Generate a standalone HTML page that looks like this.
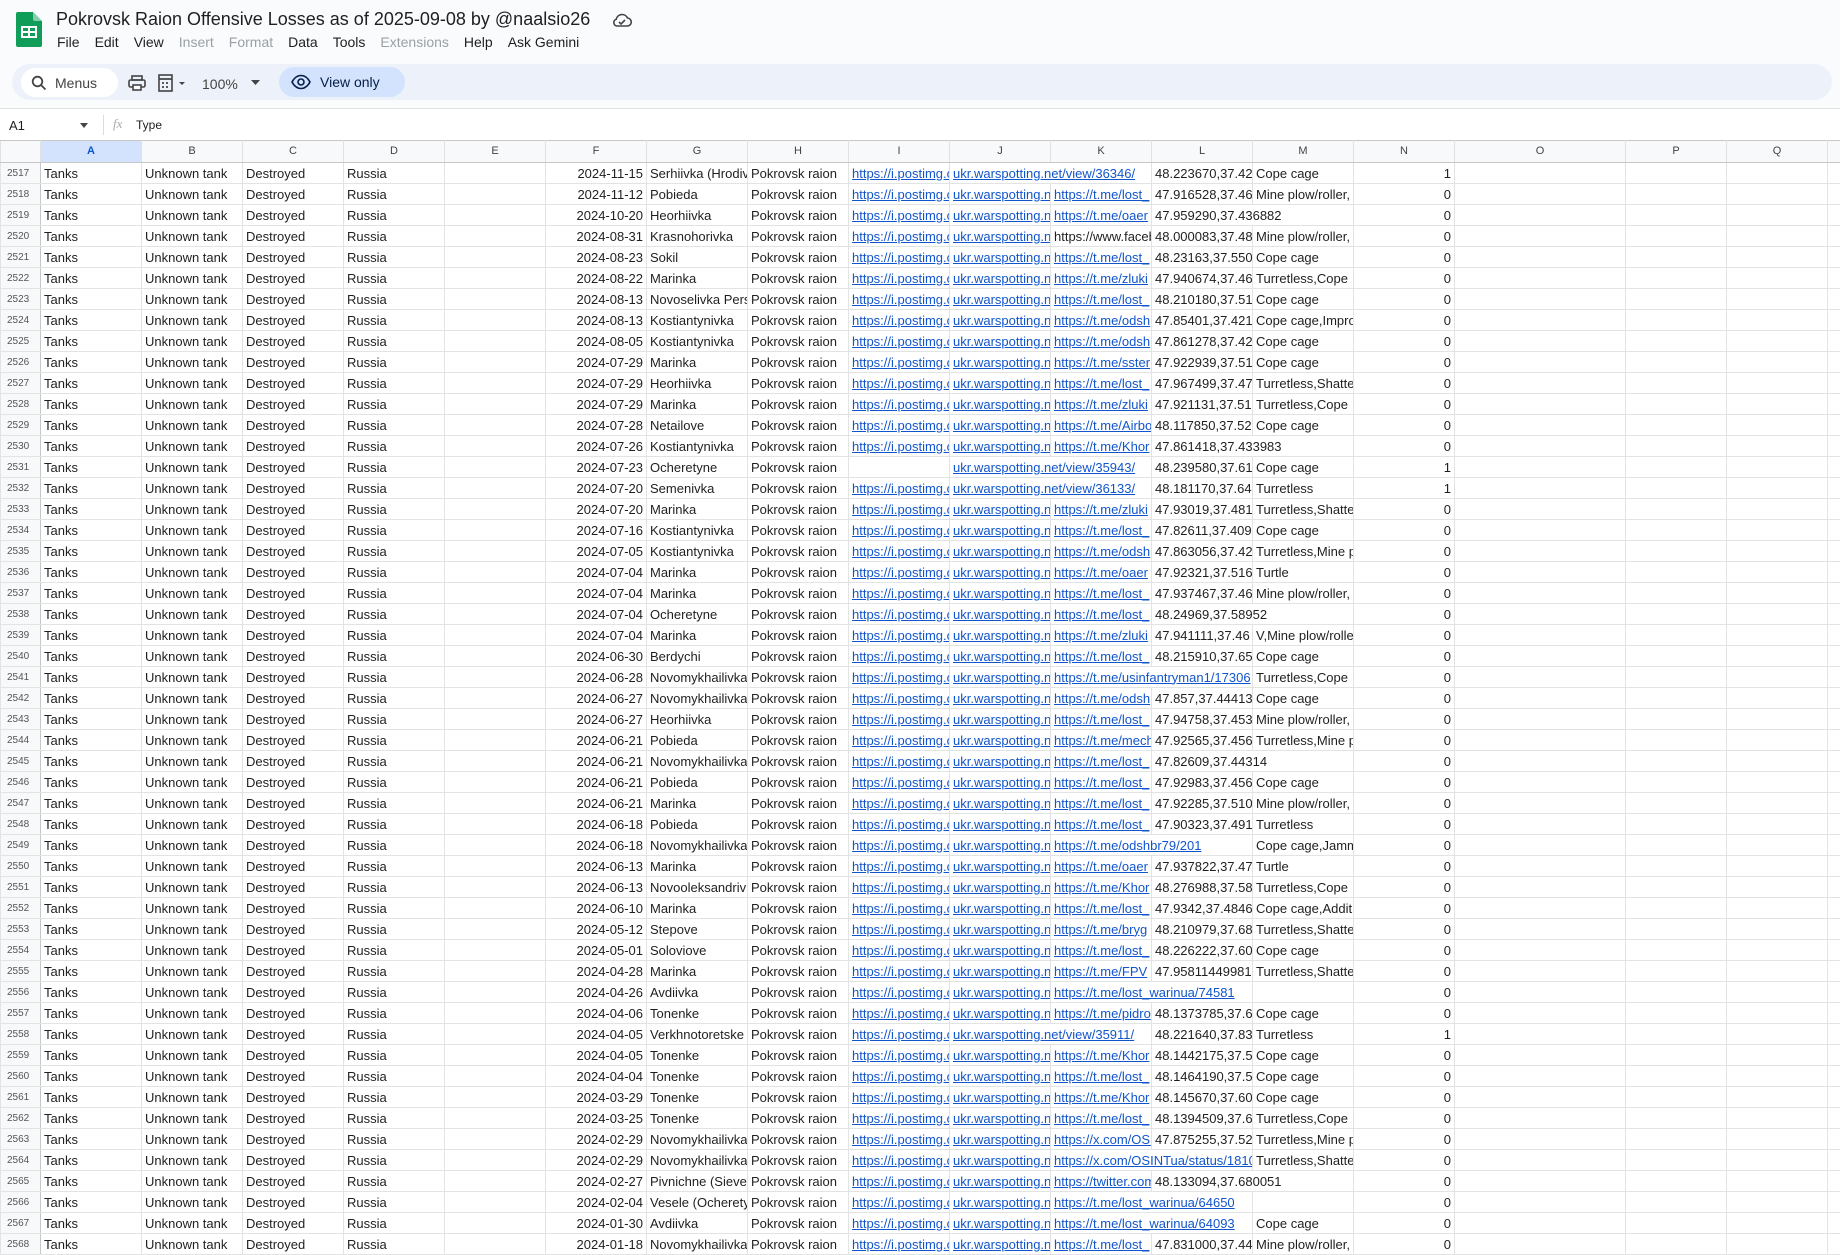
<!DOCTYPE html>
<html><head><meta charset="utf-8">
<style>
*{box-sizing:border-box;margin:0;padding:0}
body{width:1840px;height:1240px;overflow:hidden;background:#f9fbfd;font-family:"Liberation Sans",Arial,sans-serif;color:#1f1f1f;position:relative}
.logo{position:absolute;left:16px;top:12px}
.title{position:absolute;left:56px;top:9px;font-size:18px;color:#1f1f1f}
.cloud{position:absolute;left:612px;top:12px}
.menu{position:absolute;left:57px;top:34px;font-size:14px;display:flex;gap:0}
.menu span{margin-right:15px}
.menu .g{color:#9aa0a6}
.tb{position:absolute;left:12px;top:64px;width:1820px;height:36px;background:#edf2fa;border-radius:18px}
.search{position:absolute;left:21px;top:68px;width:97px;height:29px;background:#fff;border-radius:15px;font-size:14px;color:#444}
.search span{position:absolute;left:34px;top:7px}
.pct{position:absolute;left:202px;top:76px;font-size:14px;color:#444}
.view{position:absolute;left:279px;top:67px;width:126px;height:30px;background:#d3e3fd;border-radius:15px;font-size:14px;color:#041e49}
.view span{position:absolute;left:41px;top:7px;font-weight:bold;font-weight:500}
.fbar{position:absolute;left:0;top:108px;width:1840px;height:32px;background:#fff;border-top:1px solid #e1e3e1}
.fbar .a1{position:absolute;left:9px;top:9px;font-size:13px}
.fbar .dv{position:absolute;left:103px;top:6px;width:1px;height:20px;background:#dadce0}
.fbar .fx{position:absolute;left:113px;top:7px;font-size:13px;color:#aaa;font-style:italic;font-family:"Liberation Serif",serif}
.fbar .ty{position:absolute;left:136px;top:9px;font-size:12px}
table{position:absolute;left:0;top:140px;width:1840px;border-collapse:collapse;table-layout:fixed;background:#fff;font-size:13px}
td,th{height:21px;border:1px solid #e2e3e3;overflow:hidden;white-space:nowrap;padding:0 3px;text-align:left;font-weight:normal;line-height:19px}
thead th{background:#f8f9fa;color:#444;font-size:11px;text-align:center;height:22px;border-color:#c7c7c7 #e1e1e1}
thead th.sel{background:#d3e3fd;color:#0b57d0;font-weight:bold}
tbody th{background:#f8f9fa;color:#555;font-size:10px;text-align:left;padding-left:6px;border-right-color:#c7c7c7}
td.r{text-align:right}
td a{color:#1155cc;text-decoration:underline}
</style></head><body>
<svg class="logo" width="26" height="35" viewBox="0 0 26 35"><path d="M2 0h15l9 9v24a2 2 0 0 1-2 2H2a2 2 0 0 1-2-2V2a2 2 0 0 1 2-2z" fill="#0f9d58"/><path d="M17 0v7a2 2 0 0 0 2 2h7z" fill="#87ceac"/><rect x="6" y="15" width="14" height="10" fill="none" stroke="#fff" stroke-width="2"/><path d="M6 20h14M13 15v10" stroke="#fff" stroke-width="2"/></svg>
<div class="title">Pokrovsk Raion Offensive Losses as of 2025-09-08 by @naalsio26</div>
<svg class="cloud" width="20" height="16" viewBox="0 0 20 16"><path d="M5 14h10a4 4 0 0 0 .5-8A6 6 0 0 0 4.2 7.2 3.5 3.5 0 0 0 5 14z" fill="none" stroke="#444" stroke-width="1.6"/><path d="M7 10l2 2 4-4" fill="none" stroke="#444" stroke-width="1.6"/></svg>
<div class="menu"><span>File</span><span>Edit</span><span>View</span><span class="g">Insert</span><span class="g">Format</span><span>Data</span><span>Tools</span><span class="g">Extensions</span><span>Help</span><span>Ask Gemini</span></div>
<div class="tb"></div>
<div class="search"><svg style="position:absolute;left:10px;top:7px" width="16" height="16" viewBox="0 0 16 16"><circle cx="6.5" cy="6.5" r="4.8" fill="none" stroke="#444" stroke-width="1.8"/><path d="M10 10l4.5 4.5" stroke="#444" stroke-width="1.8"/></svg><span>Menus</span></div>
<svg style="position:absolute;left:128px;top:75px" width="18" height="16" viewBox="0 0 18 16"><rect x="4" y="1" width="10" height="4" fill="none" stroke="#444" stroke-width="1.6"/><rect x="1" y="5" width="16" height="7" rx="1.5" fill="none" stroke="#444" stroke-width="1.6"/><rect x="5" y="10" width="8" height="5" fill="#fff" stroke="#444" stroke-width="1.6"/></svg>
<svg style="position:absolute;left:158px;top:74px" width="30" height="18" viewBox="0 0 30 18"><rect x="1" y="1" width="13" height="16" fill="none" stroke="#444" stroke-width="1.6"/><path d="M1 5h13M4 9h2M8 9h2M4 13h2M8 13h2" stroke="#444" stroke-width="1.8"/><path d="M21 8h6l-3 3z" fill="#444"/></svg>
<div class="pct">100%</div>
<svg style="position:absolute;left:251px;top:80px" width="9" height="5" viewBox="0 0 9 5"><path d="M0 0h9L4.5 5z" fill="#444"/></svg>
<div class="view"><svg style="position:absolute;left:12px;top:7px" width="20" height="16" viewBox="0 0 20 16"><path d="M1 8c2.5-4.5 5.5-6.5 9-6.5s6.5 2 9 6.5c-2.5 4.5-5.5 6.5-9 6.5S3.5 12.5 1 8z" fill="none" stroke="#041e49" stroke-width="1.6"/><circle cx="10" cy="8" r="3" fill="none" stroke="#041e49" stroke-width="1.6"/></svg><span>View only</span></div>
<div class="fbar"><span class="a1">A1</span><svg style="position:absolute;left:80px;top:14px" width="8" height="5"><path d="M0 0h8L4 5z" fill="#444"/></svg><div class="dv"></div><span class="fx">fx</span><span class="ty">Type</span></div>
<table>
<colgroup><col style="width:40px"><col style="width:101px"><col style="width:101px"><col style="width:101px"><col style="width:101px"><col style="width:101px"><col style="width:101px"><col style="width:101px"><col style="width:101px"><col style="width:101px"><col style="width:101px"><col style="width:101px"><col style="width:101px"><col style="width:101px"><col style="width:101px"><col style="width:171px"><col style="width:101px"><col style="width:101px"><col style="width:13px"></colgroup>
<thead><tr><th></th><th class="sel">A</th><th>B</th><th>C</th><th>D</th><th>E</th><th>F</th><th>G</th><th>H</th><th>I</th><th>J</th><th>K</th><th>L</th><th>M</th><th>N</th><th>O</th><th>P</th><th>Q</th><th></th></tr></thead>
<tbody>
<tr><th>2517</th><td>Tanks</td><td>Unknown tank</td><td>Destroyed</td><td>Russia</td><td></td><td class="r">2024-11-15</td><td>Serhiivka (Hrodivka)</td><td>Pokrovsk raion</td><td><a>https://i.postimg.cc</a></td><td colspan="2"><a>ukr.warspotting.net/view/36346/</a></td><td>48.223670,37.42</td><td>Cope cage</td><td class="r">1</td><td></td><td></td><td></td><td></td></tr>
<tr><th>2518</th><td>Tanks</td><td>Unknown tank</td><td>Destroyed</td><td>Russia</td><td></td><td class="r">2024-11-12</td><td>Pobieda</td><td>Pokrovsk raion</td><td><a>https://i.postimg.cc</a></td><td><a>ukr.warspotting.net</a></td><td><a>https://t.me/lost_</a></td><td>47.916528,37.46</td><td>Mine plow/roller,</td><td class="r">0</td><td></td><td></td><td></td><td></td></tr>
<tr><th>2519</th><td>Tanks</td><td>Unknown tank</td><td>Destroyed</td><td>Russia</td><td></td><td class="r">2024-10-20</td><td>Heorhiivka</td><td>Pokrovsk raion</td><td><a>https://i.postimg.cc</a></td><td><a>ukr.warspotting.net</a></td><td><a>https://t.me/oaer</a></td><td colspan="2">47.959290,37.436882</td><td class="r">0</td><td></td><td></td><td></td><td></td></tr>
<tr><th>2520</th><td>Tanks</td><td>Unknown tank</td><td>Destroyed</td><td>Russia</td><td></td><td class="r">2024-08-31</td><td>Krasnohorivka</td><td>Pokrovsk raion</td><td><a>https://i.postimg.cc</a></td><td><a>ukr.warspotting.net</a></td><td>https://www.facebook</td><td>48.000083,37.48</td><td>Mine plow/roller,</td><td class="r">0</td><td></td><td></td><td></td><td></td></tr>
<tr><th>2521</th><td>Tanks</td><td>Unknown tank</td><td>Destroyed</td><td>Russia</td><td></td><td class="r">2024-08-23</td><td>Sokil</td><td>Pokrovsk raion</td><td><a>https://i.postimg.cc</a></td><td><a>ukr.warspotting.net</a></td><td><a>https://t.me/lost_</a></td><td>48.23163,37.550</td><td>Cope cage</td><td class="r">0</td><td></td><td></td><td></td><td></td></tr>
<tr><th>2522</th><td>Tanks</td><td>Unknown tank</td><td>Destroyed</td><td>Russia</td><td></td><td class="r">2024-08-22</td><td>Marinka</td><td>Pokrovsk raion</td><td><a>https://i.postimg.cc</a></td><td><a>ukr.warspotting.net</a></td><td><a>https://t.me/zluki</a></td><td>47.940674,37.46</td><td>Turretless,Cope</td><td class="r">0</td><td></td><td></td><td></td><td></td></tr>
<tr><th>2523</th><td>Tanks</td><td>Unknown tank</td><td>Destroyed</td><td>Russia</td><td></td><td class="r">2024-08-13</td><td>Novoselivka Persha</td><td>Pokrovsk raion</td><td><a>https://i.postimg.cc</a></td><td><a>ukr.warspotting.net</a></td><td><a>https://t.me/lost_</a></td><td>48.210180,37.51</td><td>Cope cage</td><td class="r">0</td><td></td><td></td><td></td><td></td></tr>
<tr><th>2524</th><td>Tanks</td><td>Unknown tank</td><td>Destroyed</td><td>Russia</td><td></td><td class="r">2024-08-13</td><td>Kostiantynivka</td><td>Pokrovsk raion</td><td><a>https://i.postimg.cc</a></td><td><a>ukr.warspotting.net</a></td><td><a>https://t.me/odsh</a></td><td>47.85401,37.421</td><td>Cope cage,Improvised</td><td class="r">0</td><td></td><td></td><td></td><td></td></tr>
<tr><th>2525</th><td>Tanks</td><td>Unknown tank</td><td>Destroyed</td><td>Russia</td><td></td><td class="r">2024-08-05</td><td>Kostiantynivka</td><td>Pokrovsk raion</td><td><a>https://i.postimg.cc</a></td><td><a>ukr.warspotting.net</a></td><td><a>https://t.me/odsh</a></td><td>47.861278,37.42</td><td>Cope cage</td><td class="r">0</td><td></td><td></td><td></td><td></td></tr>
<tr><th>2526</th><td>Tanks</td><td>Unknown tank</td><td>Destroyed</td><td>Russia</td><td></td><td class="r">2024-07-29</td><td>Marinka</td><td>Pokrovsk raion</td><td><a>https://i.postimg.cc</a></td><td><a>ukr.warspotting.net</a></td><td><a>https://t.me/sster</a></td><td>47.922939,37.51</td><td>Cope cage</td><td class="r">0</td><td></td><td></td><td></td><td></td></tr>
<tr><th>2527</th><td>Tanks</td><td>Unknown tank</td><td>Destroyed</td><td>Russia</td><td></td><td class="r">2024-07-29</td><td>Heorhiivka</td><td>Pokrovsk raion</td><td><a>https://i.postimg.cc</a></td><td><a>ukr.warspotting.net</a></td><td><a>https://t.me/lost_</a></td><td>47.967499,37.47</td><td>Turretless,Shattered</td><td class="r">0</td><td></td><td></td><td></td><td></td></tr>
<tr><th>2528</th><td>Tanks</td><td>Unknown tank</td><td>Destroyed</td><td>Russia</td><td></td><td class="r">2024-07-29</td><td>Marinka</td><td>Pokrovsk raion</td><td><a>https://i.postimg.cc</a></td><td><a>ukr.warspotting.net</a></td><td><a>https://t.me/zluki</a></td><td>47.921131,37.51</td><td>Turretless,Cope</td><td class="r">0</td><td></td><td></td><td></td><td></td></tr>
<tr><th>2529</th><td>Tanks</td><td>Unknown tank</td><td>Destroyed</td><td>Russia</td><td></td><td class="r">2024-07-28</td><td>Netailove</td><td>Pokrovsk raion</td><td><a>https://i.postimg.cc</a></td><td><a>ukr.warspotting.net</a></td><td><a>https://t.me/Airbo</a></td><td>48.117850,37.52</td><td>Cope cage</td><td class="r">0</td><td></td><td></td><td></td><td></td></tr>
<tr><th>2530</th><td>Tanks</td><td>Unknown tank</td><td>Destroyed</td><td>Russia</td><td></td><td class="r">2024-07-26</td><td>Kostiantynivka</td><td>Pokrovsk raion</td><td><a>https://i.postimg.cc</a></td><td><a>ukr.warspotting.net</a></td><td><a>https://t.me/Khor</a></td><td colspan="2">47.861418,37.433983</td><td class="r">0</td><td></td><td></td><td></td><td></td></tr>
<tr><th>2531</th><td>Tanks</td><td>Unknown tank</td><td>Destroyed</td><td>Russia</td><td></td><td class="r">2024-07-23</td><td>Ocheretyne</td><td>Pokrovsk raion</td><td></td><td colspan="2"><a>ukr.warspotting.net/view/35943/</a></td><td>48.239580,37.61</td><td>Cope cage</td><td class="r">1</td><td></td><td></td><td></td><td></td></tr>
<tr><th>2532</th><td>Tanks</td><td>Unknown tank</td><td>Destroyed</td><td>Russia</td><td></td><td class="r">2024-07-20</td><td>Semenivka</td><td>Pokrovsk raion</td><td><a>https://i.postimg.cc</a></td><td colspan="2"><a>ukr.warspotting.net/view/36133/</a></td><td>48.181170,37.64</td><td>Turretless</td><td class="r">1</td><td></td><td></td><td></td><td></td></tr>
<tr><th>2533</th><td>Tanks</td><td>Unknown tank</td><td>Destroyed</td><td>Russia</td><td></td><td class="r">2024-07-20</td><td>Marinka</td><td>Pokrovsk raion</td><td><a>https://i.postimg.cc</a></td><td><a>ukr.warspotting.net</a></td><td><a>https://t.me/zluki</a></td><td>47.93019,37.481</td><td>Turretless,Shattered</td><td class="r">0</td><td></td><td></td><td></td><td></td></tr>
<tr><th>2534</th><td>Tanks</td><td>Unknown tank</td><td>Destroyed</td><td>Russia</td><td></td><td class="r">2024-07-16</td><td>Kostiantynivka</td><td>Pokrovsk raion</td><td><a>https://i.postimg.cc</a></td><td><a>ukr.warspotting.net</a></td><td><a>https://t.me/lost_</a></td><td>47.82611,37.409</td><td>Cope cage</td><td class="r">0</td><td></td><td></td><td></td><td></td></tr>
<tr><th>2535</th><td>Tanks</td><td>Unknown tank</td><td>Destroyed</td><td>Russia</td><td></td><td class="r">2024-07-05</td><td>Kostiantynivka</td><td>Pokrovsk raion</td><td><a>https://i.postimg.cc</a></td><td><a>ukr.warspotting.net</a></td><td><a>https://t.me/odsh</a></td><td>47.863056,37.42</td><td>Turretless,Mine plow</td><td class="r">0</td><td></td><td></td><td></td><td></td></tr>
<tr><th>2536</th><td>Tanks</td><td>Unknown tank</td><td>Destroyed</td><td>Russia</td><td></td><td class="r">2024-07-04</td><td>Marinka</td><td>Pokrovsk raion</td><td><a>https://i.postimg.cc</a></td><td><a>ukr.warspotting.net</a></td><td><a>https://t.me/oaer</a></td><td>47.92321,37.516</td><td>Turtle</td><td class="r">0</td><td></td><td></td><td></td><td></td></tr>
<tr><th>2537</th><td>Tanks</td><td>Unknown tank</td><td>Destroyed</td><td>Russia</td><td></td><td class="r">2024-07-04</td><td>Marinka</td><td>Pokrovsk raion</td><td><a>https://i.postimg.cc</a></td><td><a>ukr.warspotting.net</a></td><td><a>https://t.me/lost_</a></td><td>47.937467,37.46</td><td>Mine plow/roller,</td><td class="r">0</td><td></td><td></td><td></td><td></td></tr>
<tr><th>2538</th><td>Tanks</td><td>Unknown tank</td><td>Destroyed</td><td>Russia</td><td></td><td class="r">2024-07-04</td><td>Ocheretyne</td><td>Pokrovsk raion</td><td><a>https://i.postimg.cc</a></td><td><a>ukr.warspotting.net</a></td><td><a>https://t.me/lost_</a></td><td colspan="2">48.24969,37.58952</td><td class="r">0</td><td></td><td></td><td></td><td></td></tr>
<tr><th>2539</th><td>Tanks</td><td>Unknown tank</td><td>Destroyed</td><td>Russia</td><td></td><td class="r">2024-07-04</td><td>Marinka</td><td>Pokrovsk raion</td><td><a>https://i.postimg.cc</a></td><td><a>ukr.warspotting.net</a></td><td><a>https://t.me/zluki</a></td><td>47.941111,37.46</td><td>V,Mine plow/roller</td><td class="r">0</td><td></td><td></td><td></td><td></td></tr>
<tr><th>2540</th><td>Tanks</td><td>Unknown tank</td><td>Destroyed</td><td>Russia</td><td></td><td class="r">2024-06-30</td><td>Berdychi</td><td>Pokrovsk raion</td><td><a>https://i.postimg.cc</a></td><td><a>ukr.warspotting.net</a></td><td><a>https://t.me/lost_</a></td><td>48.215910,37.65</td><td>Cope cage</td><td class="r">0</td><td></td><td></td><td></td><td></td></tr>
<tr><th>2541</th><td>Tanks</td><td>Unknown tank</td><td>Destroyed</td><td>Russia</td><td></td><td class="r">2024-06-28</td><td>Novomykhailivka</td><td>Pokrovsk raion</td><td><a>https://i.postimg.cc</a></td><td><a>ukr.warspotting.net</a></td><td colspan="2"><a>https://t.me/usinfantryman1/17306</a></td><td>Turretless,Cope</td><td class="r">0</td><td></td><td></td><td></td><td></td></tr>
<tr><th>2542</th><td>Tanks</td><td>Unknown tank</td><td>Destroyed</td><td>Russia</td><td></td><td class="r">2024-06-27</td><td>Novomykhailivka</td><td>Pokrovsk raion</td><td><a>https://i.postimg.cc</a></td><td><a>ukr.warspotting.net</a></td><td><a>https://t.me/odsh</a></td><td>47.857,37.44413</td><td>Cope cage</td><td class="r">0</td><td></td><td></td><td></td><td></td></tr>
<tr><th>2543</th><td>Tanks</td><td>Unknown tank</td><td>Destroyed</td><td>Russia</td><td></td><td class="r">2024-06-27</td><td>Heorhiivka</td><td>Pokrovsk raion</td><td><a>https://i.postimg.cc</a></td><td><a>ukr.warspotting.net</a></td><td><a>https://t.me/lost_</a></td><td>47.94758,37.453</td><td>Mine plow/roller,</td><td class="r">0</td><td></td><td></td><td></td><td></td></tr>
<tr><th>2544</th><td>Tanks</td><td>Unknown tank</td><td>Destroyed</td><td>Russia</td><td></td><td class="r">2024-06-21</td><td>Pobieda</td><td>Pokrovsk raion</td><td><a>https://i.postimg.cc</a></td><td><a>ukr.warspotting.net</a></td><td><a>https://t.me/mech</a></td><td>47.92565,37.456</td><td>Turretless,Mine plow</td><td class="r">0</td><td></td><td></td><td></td><td></td></tr>
<tr><th>2545</th><td>Tanks</td><td>Unknown tank</td><td>Destroyed</td><td>Russia</td><td></td><td class="r">2024-06-21</td><td>Novomykhailivka</td><td>Pokrovsk raion</td><td><a>https://i.postimg.cc</a></td><td><a>ukr.warspotting.net</a></td><td><a>https://t.me/lost_</a></td><td colspan="2">47.82609,37.44314</td><td class="r">0</td><td></td><td></td><td></td><td></td></tr>
<tr><th>2546</th><td>Tanks</td><td>Unknown tank</td><td>Destroyed</td><td>Russia</td><td></td><td class="r">2024-06-21</td><td>Pobieda</td><td>Pokrovsk raion</td><td><a>https://i.postimg.cc</a></td><td><a>ukr.warspotting.net</a></td><td><a>https://t.me/lost_</a></td><td>47.92983,37.456</td><td>Cope cage</td><td class="r">0</td><td></td><td></td><td></td><td></td></tr>
<tr><th>2547</th><td>Tanks</td><td>Unknown tank</td><td>Destroyed</td><td>Russia</td><td></td><td class="r">2024-06-21</td><td>Marinka</td><td>Pokrovsk raion</td><td><a>https://i.postimg.cc</a></td><td><a>ukr.warspotting.net</a></td><td><a>https://t.me/lost_</a></td><td>47.92285,37.510</td><td>Mine plow/roller,</td><td class="r">0</td><td></td><td></td><td></td><td></td></tr>
<tr><th>2548</th><td>Tanks</td><td>Unknown tank</td><td>Destroyed</td><td>Russia</td><td></td><td class="r">2024-06-18</td><td>Pobieda</td><td>Pokrovsk raion</td><td><a>https://i.postimg.cc</a></td><td><a>ukr.warspotting.net</a></td><td><a>https://t.me/lost_</a></td><td>47.90323,37.491</td><td>Turretless</td><td class="r">0</td><td></td><td></td><td></td><td></td></tr>
<tr><th>2549</th><td>Tanks</td><td>Unknown tank</td><td>Destroyed</td><td>Russia</td><td></td><td class="r">2024-06-18</td><td>Novomykhailivka</td><td>Pokrovsk raion</td><td><a>https://i.postimg.cc</a></td><td><a>ukr.warspotting.net</a></td><td colspan="2"><a>https://t.me/odshbr79/201</a></td><td>Cope cage,Jammer</td><td class="r">0</td><td></td><td></td><td></td><td></td></tr>
<tr><th>2550</th><td>Tanks</td><td>Unknown tank</td><td>Destroyed</td><td>Russia</td><td></td><td class="r">2024-06-13</td><td>Marinka</td><td>Pokrovsk raion</td><td><a>https://i.postimg.cc</a></td><td><a>ukr.warspotting.net</a></td><td><a>https://t.me/oaer</a></td><td>47.937822,37.47</td><td>Turtle</td><td class="r">0</td><td></td><td></td><td></td><td></td></tr>
<tr><th>2551</th><td>Tanks</td><td>Unknown tank</td><td>Destroyed</td><td>Russia</td><td></td><td class="r">2024-06-13</td><td>Novooleksandrivka</td><td>Pokrovsk raion</td><td><a>https://i.postimg.cc</a></td><td><a>ukr.warspotting.net</a></td><td><a>https://t.me/Khor</a></td><td>48.276988,37.58</td><td>Turretless,Cope</td><td class="r">0</td><td></td><td></td><td></td><td></td></tr>
<tr><th>2552</th><td>Tanks</td><td>Unknown tank</td><td>Destroyed</td><td>Russia</td><td></td><td class="r">2024-06-10</td><td>Marinka</td><td>Pokrovsk raion</td><td><a>https://i.postimg.cc</a></td><td><a>ukr.warspotting.net</a></td><td><a>https://t.me/lost_</a></td><td>47.9342,37.4846</td><td>Cope cage,Additional</td><td class="r">0</td><td></td><td></td><td></td><td></td></tr>
<tr><th>2553</th><td>Tanks</td><td>Unknown tank</td><td>Destroyed</td><td>Russia</td><td></td><td class="r">2024-05-12</td><td>Stepove</td><td>Pokrovsk raion</td><td><a>https://i.postimg.cc</a></td><td><a>ukr.warspotting.net</a></td><td><a>https://t.me/bryg</a></td><td>48.210979,37.68</td><td>Turretless,Shattered</td><td class="r">0</td><td></td><td></td><td></td><td></td></tr>
<tr><th>2554</th><td>Tanks</td><td>Unknown tank</td><td>Destroyed</td><td>Russia</td><td></td><td class="r">2024-05-01</td><td>Soloviove</td><td>Pokrovsk raion</td><td><a>https://i.postimg.cc</a></td><td><a>ukr.warspotting.net</a></td><td><a>https://t.me/lost_</a></td><td>48.226222,37.60</td><td>Cope cage</td><td class="r">0</td><td></td><td></td><td></td><td></td></tr>
<tr><th>2555</th><td>Tanks</td><td>Unknown tank</td><td>Destroyed</td><td>Russia</td><td></td><td class="r">2024-04-28</td><td>Marinka</td><td>Pokrovsk raion</td><td><a>https://i.postimg.cc</a></td><td><a>ukr.warspotting.net</a></td><td><a>https://t.me/FPV</a></td><td>47.95811449981</td><td>Turretless,Shattered</td><td class="r">0</td><td></td><td></td><td></td><td></td></tr>
<tr><th>2556</th><td>Tanks</td><td>Unknown tank</td><td>Destroyed</td><td>Russia</td><td></td><td class="r">2024-04-26</td><td>Avdiivka</td><td>Pokrovsk raion</td><td><a>https://i.postimg.cc</a></td><td><a>ukr.warspotting.net</a></td><td colspan="2"><a>https://t.me/lost_warinua/74581</a></td><td></td><td class="r">0</td><td></td><td></td><td></td><td></td></tr>
<tr><th>2557</th><td>Tanks</td><td>Unknown tank</td><td>Destroyed</td><td>Russia</td><td></td><td class="r">2024-04-06</td><td>Tonenke</td><td>Pokrovsk raion</td><td><a>https://i.postimg.cc</a></td><td><a>ukr.warspotting.net</a></td><td><a>https://t.me/pidro</a></td><td>48.1373785,37.6</td><td>Cope cage</td><td class="r">0</td><td></td><td></td><td></td><td></td></tr>
<tr><th>2558</th><td>Tanks</td><td>Unknown tank</td><td>Destroyed</td><td>Russia</td><td></td><td class="r">2024-04-05</td><td>Verkhnotoretske</td><td>Pokrovsk raion</td><td><a>https://i.postimg.cc</a></td><td colspan="2"><a>ukr.warspotting.net/view/35911/</a></td><td>48.221640,37.83</td><td>Turretless</td><td class="r">1</td><td></td><td></td><td></td><td></td></tr>
<tr><th>2559</th><td>Tanks</td><td>Unknown tank</td><td>Destroyed</td><td>Russia</td><td></td><td class="r">2024-04-05</td><td>Tonenke</td><td>Pokrovsk raion</td><td><a>https://i.postimg.cc</a></td><td><a>ukr.warspotting.net</a></td><td><a>https://t.me/Khor</a></td><td>48.1442175,37.5</td><td>Cope cage</td><td class="r">0</td><td></td><td></td><td></td><td></td></tr>
<tr><th>2560</th><td>Tanks</td><td>Unknown tank</td><td>Destroyed</td><td>Russia</td><td></td><td class="r">2024-04-04</td><td>Tonenke</td><td>Pokrovsk raion</td><td><a>https://i.postimg.cc</a></td><td><a>ukr.warspotting.net</a></td><td><a>https://t.me/lost_</a></td><td>48.1464190,37.5</td><td>Cope cage</td><td class="r">0</td><td></td><td></td><td></td><td></td></tr>
<tr><th>2561</th><td>Tanks</td><td>Unknown tank</td><td>Destroyed</td><td>Russia</td><td></td><td class="r">2024-03-29</td><td>Tonenke</td><td>Pokrovsk raion</td><td><a>https://i.postimg.cc</a></td><td><a>ukr.warspotting.net</a></td><td><a>https://t.me/Khor</a></td><td>48.145670,37.60</td><td>Cope cage</td><td class="r">0</td><td></td><td></td><td></td><td></td></tr>
<tr><th>2562</th><td>Tanks</td><td>Unknown tank</td><td>Destroyed</td><td>Russia</td><td></td><td class="r">2024-03-25</td><td>Tonenke</td><td>Pokrovsk raion</td><td><a>https://i.postimg.cc</a></td><td><a>ukr.warspotting.net</a></td><td><a>https://t.me/lost_</a></td><td>48.1394509,37.6</td><td>Turretless,Cope</td><td class="r">0</td><td></td><td></td><td></td><td></td></tr>
<tr><th>2563</th><td>Tanks</td><td>Unknown tank</td><td>Destroyed</td><td>Russia</td><td></td><td class="r">2024-02-29</td><td>Novomykhailivka</td><td>Pokrovsk raion</td><td><a>https://i.postimg.cc</a></td><td><a>ukr.warspotting.net</a></td><td><a>https://x.com/OSI</a></td><td>47.875255,37.52</td><td>Turretless,Mine plow</td><td class="r">0</td><td></td><td></td><td></td><td></td></tr>
<tr><th>2564</th><td>Tanks</td><td>Unknown tank</td><td>Destroyed</td><td>Russia</td><td></td><td class="r">2024-02-29</td><td>Novomykhailivka</td><td>Pokrovsk raion</td><td><a>https://i.postimg.cc</a></td><td><a>ukr.warspotting.net</a></td><td colspan="2"><a>https://x.com/OSINTua/status/1810</a></td><td>Turretless,Shattered</td><td class="r">0</td><td></td><td></td><td></td><td></td></tr>
<tr><th>2565</th><td>Tanks</td><td>Unknown tank</td><td>Destroyed</td><td>Russia</td><td></td><td class="r">2024-02-27</td><td>Pivnichne (Sieverne)</td><td>Pokrovsk raion</td><td><a>https://i.postimg.cc</a></td><td><a>ukr.warspotting.net</a></td><td><a>https://twitter.com</a></td><td colspan="2">48.133094,37.680051</td><td class="r">0</td><td></td><td></td><td></td><td></td></tr>
<tr><th>2566</th><td>Tanks</td><td>Unknown tank</td><td>Destroyed</td><td>Russia</td><td></td><td class="r">2024-02-04</td><td>Vesele (Ocheretyne)</td><td>Pokrovsk raion</td><td><a>https://i.postimg.cc</a></td><td><a>ukr.warspotting.net</a></td><td colspan="2"><a>https://t.me/lost_warinua/64650</a></td><td></td><td class="r">0</td><td></td><td></td><td></td><td></td></tr>
<tr><th>2567</th><td>Tanks</td><td>Unknown tank</td><td>Destroyed</td><td>Russia</td><td></td><td class="r">2024-01-30</td><td>Avdiivka</td><td>Pokrovsk raion</td><td><a>https://i.postimg.cc</a></td><td><a>ukr.warspotting.net</a></td><td colspan="2"><a>https://t.me/lost_warinua/64093</a></td><td>Cope cage</td><td class="r">0</td><td></td><td></td><td></td><td></td></tr>
<tr><th>2568</th><td>Tanks</td><td>Unknown tank</td><td>Destroyed</td><td>Russia</td><td></td><td class="r">2024-01-18</td><td>Novomykhailivka</td><td>Pokrovsk raion</td><td><a>https://i.postimg.cc</a></td><td><a>ukr.warspotting.net</a></td><td><a>https://t.me/lost_</a></td><td>47.831000,37.44</td><td>Mine plow/roller,</td><td class="r">0</td><td></td><td></td><td></td><td></td></tr>
</tbody></table>
</body></html>
